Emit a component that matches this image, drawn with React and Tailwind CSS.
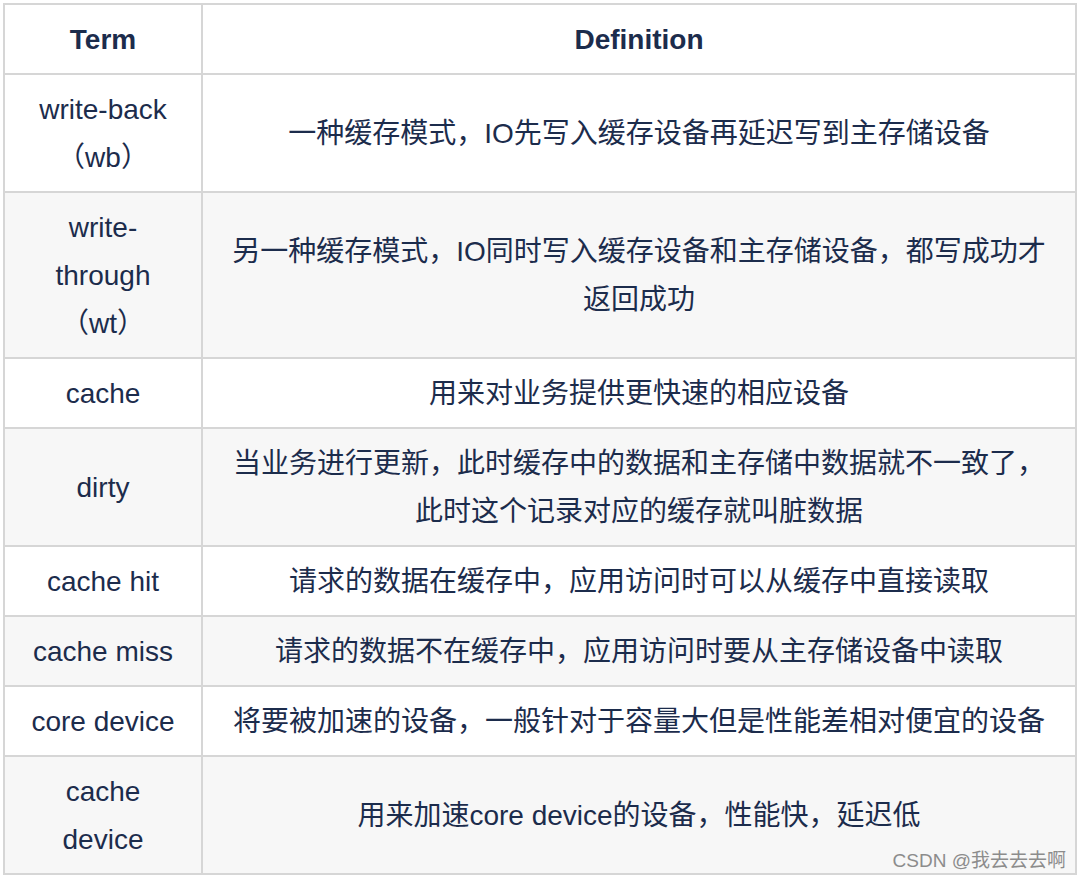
const rows = [
    { term: ['write-back', '（wb）'], def: ['一种缓存模式，IO先写入缓存设备再延迟写到主存储设备'] },
    { term: ['write-', 'through', '（wt）'], def: ['另一种缓存模式，IO同时写入缓存设备和主存储设备，都写成功才', '返回成功'] },
    { term: ['cache'], def: ['用来对业务提供更快速的相应设备'] },
    { term: ['dirty'], def: ['当业务进行更新，此时缓存中的数据和主存储中数据就不一致了，', '此时这个记录对应的缓存就叫脏数据'] },
    { term: ['cache hit'], def: ['请求的数据在缓存中，应用访问时可以从缓存中直接读取'] },
    { term: ['cache miss'], def: ['请求的数据不在缓存中，应用访问时要从主存储设备中读取'] },
    { term: ['core device'], def: ['将要被加速的设备，一般针对于容量大但是性能差相对便宜的设备'] },
    { term: ['cache', 'device'], def: ['用来加速core device的设备，性能快，延迟低'] },
];

const cell = 'border-2 border-[#d6d6d6] px-[10px] pt-[11px] pb-[9px] text-center align-middle';

export default function App() {
    return (
        <div
            className="relative w-[1080px] h-[882px] bg-white overflow-hidden text-[#1c2c4c]"
            style={{ fontFamily: '"Liberation Sans", "Noto Sans CJK SC", sans-serif' }}
        >
            <table className="ml-[3px] mt-[3px] w-[1074px] border-collapse text-[28px] leading-[48px]">
                <thead>
                    <tr className="bg-white">
                        <th className={`${cell} w-[198px] font-bold`}>Term</th>
                        <th className={`${cell} font-bold`}>Definition</th>
                    </tr>
                </thead>
                <tbody>
                    {rows.map((r, i) => (
                        <tr key={i} className={i % 2 === 1 ? 'bg-[#f7f7f7]' : 'bg-white'}>
                            <td className={cell}>
                                {r.term.map((t, j) => (
                                    <div key={j}>{t}</div>
                                ))}
                            </td>
                            <td className={cell}>
                                {r.def.map((t, j) => (
                                    <div key={j}>{t}</div>
                                ))}
                            </td>
                        </tr>
                    ))}
                </tbody>
            </table>
            <div className="absolute right-[14px] bottom-[7px] text-[19px] text-[#8c8c8c]">
                CSDN @我去去去啊
            </div>
        </div>
    );
}
